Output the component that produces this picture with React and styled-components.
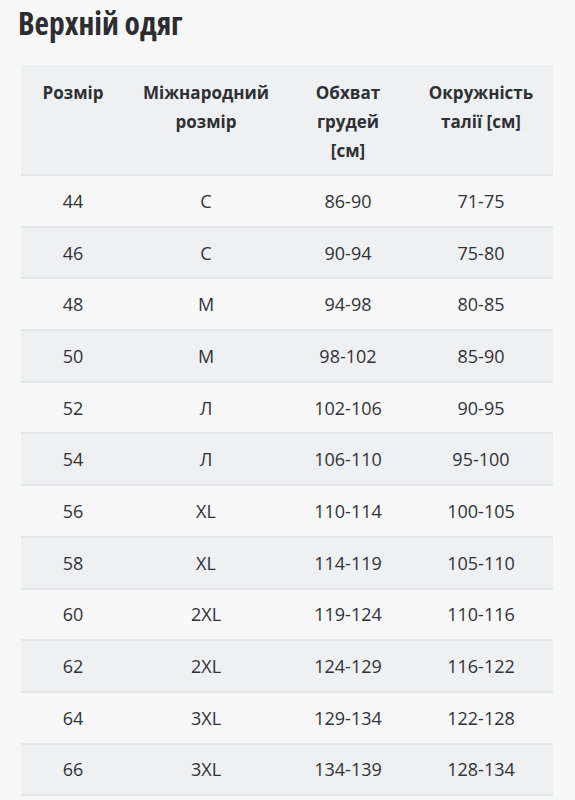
import styled, { createGlobalStyle } from 'styled-components';

const Global = createGlobalStyle`
  body {
    margin: 0;
    background: #f8f8f9;
    font-family: "Open Sans", "Noto Sans", sans-serif;
    color: #2e3034;
  }
`;

const sizes = [
  ['44', 'С', '86-90', '71-75'],
  ['46', 'С', '90-94', '75-80'],
  ['48', 'М', '94-98', '80-85'],
  ['50', 'М', '98-102', '85-90'],
  ['52', 'Л', '102-106', '90-95'],
  ['54', 'Л', '106-110', '95-100'],
  ['56', 'XL', '110-114', '100-105'],
  ['58', 'XL', '114-119', '105-110'],
  ['60', '2XL', '119-124', '110-116'],
  ['62', '2XL', '124-129', '116-122'],
  ['64', '3XL', '129-134', '122-128'],
  ['66', '3XL', '134-139', '128-134'],
];

const App = () => {
  return (
    <Page>
      <Global />
      <Title>Верхній одяг</Title>
      <Table>
        <HeadRow>
          <HeadCell>Розмір</HeadCell>
          <HeadCell>Міжнародний<br />розмір</HeadCell>
          <HeadCell>Обхват<br />грудей<br />[см]</HeadCell>
          <HeadCell>Окружність<br />талії [см]</HeadCell>
        </HeadRow>
        {sizes.map((row, i) => (
          <Row key={row[0]} $shaded={i % 2 === 1}>
            {row.map((v, j) => <Cell key={j}>{v}</Cell>)}
          </Row>
        ))}
      </Table>
    </Page>
  );
};

export default App;

const Page = styled.div`
  padding: 4px 22px 0 21px;
`;

const Title = styled.h1`
  margin: 0 0 0 -3px;
  font-size: 31.5px;
  font-weight: 700;
  font-stretch: 75%;
  line-height: 38px;
  color: #2b2d31;
`;

const Table = styled.div`
  margin-top: 23px;
  width: 532px;
`;

const RowBase = styled.div`
  display: grid;
  grid-template-columns: 104px 162px 122px 144px;
  border-bottom: 2px solid #e3e5e8;
`;

const HeadRow = styled(RowBase)`
  background: #eff0f2;
  padding: 13px 0 9px;
  align-items: start;
`;

const Row = styled(RowBase)`
  background: ${p => p.$shaded ? '#eff0f2' : '#f8f8f9'};
  padding: 10.85px 0;
  align-items: center;
`;

const HeadCell = styled.div`
  text-align: center;
  font-size: 17px;
  font-weight: 700;
  line-height: 29px;
  color: #2e3034;
`;

const Cell = styled.div`
  text-align: center;
  font-size: 18px;
  font-weight: 400;
  line-height: 28px;
  color: #303236;
`;
